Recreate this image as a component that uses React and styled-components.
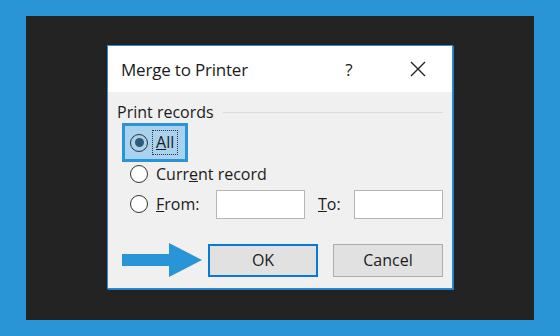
import React from "react";
import styled, { createGlobalStyle } from "styled-components";

const Global = createGlobalStyle`
  html, body {
    margin: 0;
    padding: 0;
    background: #2a95d6;
  }
  body {
    width: 560px;
    height: 336px;
    overflow: hidden;
    font-family: "Open Sans", "Noto Sans", sans-serif;
    color: #1b1b1b;
  }
`;

const Stage = styled.div`
  margin: 16px 26px 0;
  height: 304px;
  background: #232323;
  display: flex;
  align-items: center;
  justify-content: center;
`;

const Dialog = styled.div`
  width: 344px;
  border: 1px solid #2b8ad6;
  box-shadow: 1px 1px 0 #1f7fcc;
  background: #f0f0f0;
  margin-top: -2px;
`;

const TitleBar = styled.div`
  height: 46px;
  background: #fff;
  display: flex;
  align-items: center;
  padding: 0 11px 0 13px;
`;

const Title = styled.div`
  flex: 1;
  font-size: 17px;
  letter-spacing: -0.2px;
`;

const TitleButton = styled.div`
  width: ${(p) => p.$w}px;
  margin-right: ${(p) => p.$mr || 0}px;
  display: flex;
  align-items: center;
  justify-content: center;
  font-size: 17px;
`;

const Body = styled.div`
  padding: 9px 9px 11px 9px;
`;

const Legend = styled.div`
  display: flex;
  align-items: center;
  gap: 9px;
  height: 22px;
  font-size: 16px;
`;

const Rule = styled.div`
  flex: 1;
  height: 1px;
  background: #dadada;
`;

const Options = styled.div`
  margin: 0 0 0 5px;
  display: flex;
  flex-direction: column;
  align-items: flex-start;
`;

const Row = styled.div`
  display: flex;
  align-items: center;
  height: ${(p) => p.$h}px;
  margin-top: ${(p) => p.$mt || 0}px;
  padding-left: 8px;
  font-size: 16px;
`;

const Highlight = styled.div`
  display: flex;
  align-items: center;
  height: 39px;
  box-sizing: border-box;
  border: 3px solid #2a95d6;
  background: #a9d2ee;
  padding: 0 7px 0 5px;
  font-size: 16px;
`;

const Radio = styled.span`
  width: 18px;
  height: 18px;
  box-sizing: border-box;
  border-radius: 50%;
  border: 1.6px solid #333;
  background: ${(p) => (p.$checked ? "transparent" : "#fff")};
  display: flex;
  align-items: center;
  justify-content: center;
  flex-shrink: 0;
  &::after {
    content: "";
    display: ${(p) => (p.$checked ? "block" : "none")};
    width: 9px;
    height: 9px;
    border-radius: 50%;
    background: #2f5a76;
  }
`;

const Label = styled.span`
  margin-left: 8px;
  width: ${(p) => (p.$w ? `${p.$w}px` : "auto")};
`;

const Focus = styled.span`
  margin-left: 4px;
  padding: 1px 3px;
  border: 1px dotted #333;
  line-height: 21px;
`;

const Field = styled.div`
  width: 89px;
  height: 29px;
  box-sizing: border-box;
  background: #fff;
  border: 1px solid #b5b5b5;
`;

const ToLabel = styled.span`
  margin-left: 13px;
  width: 36px;
`;

const Buttons = styled.div`
  display: flex;
  align-items: center;
  margin-top: 24px;
  padding-left: 5px;
`;

const Arrow = styled.svg`
  display: block;
  margin-right: 6px;
`;

const Button = styled.div`
  width: 110px;
  height: 33px;
  box-sizing: border-box;
  display: flex;
  align-items: center;
  justify-content: center;
  background: #e1e1e1;
  border: ${(p) => (p.$default ? "2px solid #0a78d6" : "1px solid #adadad")};
  font-size: 16px;
  margin-left: ${(p) => p.$ml || 0}px;
`;

export default function App() {
  return (
    <>
      <Global />
      <Stage>
        <Dialog>
          <TitleBar>
            <Title>Merge to Printer</Title>
            <TitleButton $w={24} $mr={34}>?</TitleButton>
            <TitleButton $w={46}>
              <svg width="16" height="16" viewBox="0 0 16 16">
                <path d="M1 1 L15 15 M15 1 L1 15" stroke="#222" strokeWidth="1.4" />
              </svg>
            </TitleButton>
          </TitleBar>
          <Body>
            <Legend>
              Print records
              <Rule />
            </Legend>
            <Options>
              <Highlight>
                <Radio $checked />
                <Focus>
                  <u>A</u>ll
                </Focus>
              </Highlight>
              <Row $h={24}>
                <Radio />
                <Label>
                  Curr<u>e</u>nt record
                </Label>
              </Row>
              <Row $h={30} $mt={3}>
                <Radio />
                <Label $w={60}>
                  <u>F</u>rom:
                </Label>
                <Field />
                <ToLabel>
                  <u>T</u>o:
                </ToLabel>
                <Field />
              </Row>
            </Options>
            <Buttons>
              <Arrow width="80" height="34" viewBox="0 0 80 34">
                <path d="M0 11 H47 V0 L80 17 L47 34 V23 H0 Z" fill="#2a95d6" />
              </Arrow>
              <Button $default>OK</Button>
              <Button $ml={15}>Cancel</Button>
            </Buttons>
          </Body>
        </Dialog>
      </Stage>
    </>
  );
}
